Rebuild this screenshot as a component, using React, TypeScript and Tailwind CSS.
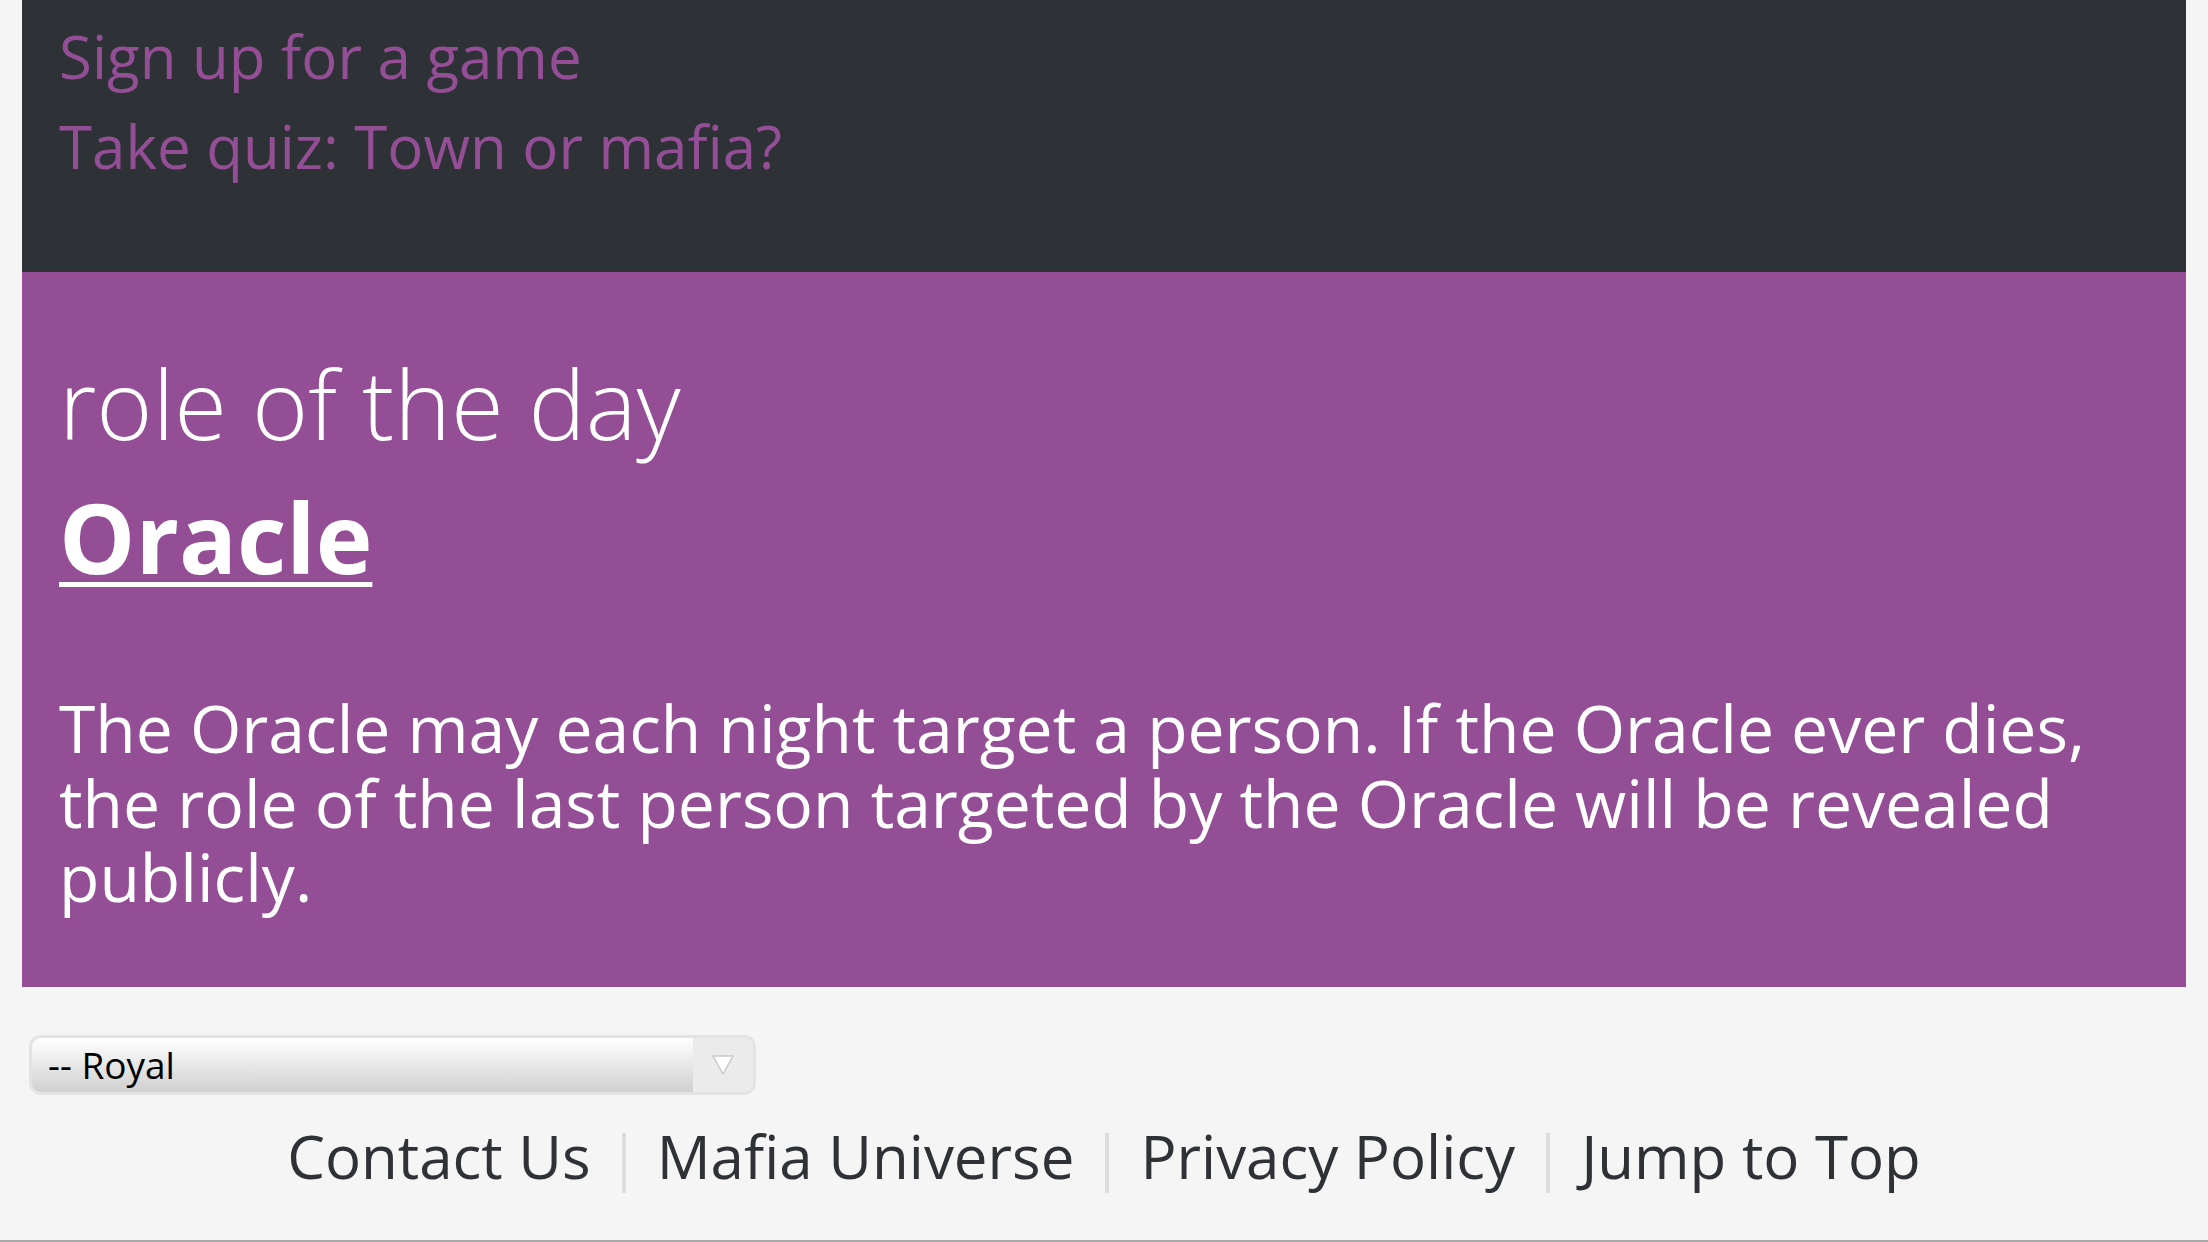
const links = ["Contact Us", "Mafia Universe", "Privacy Policy", "Jump to Top"];

const App = () => {
	return (
		<div className="min-h-screen bg-[#f5f5f5] font-['Open_Sans',sans-serif] flex flex-col">
			<section className="mx-[22px] bg-[#2e3236] pl-[37px] pt-[11px] pb-[81px]">
				<a href="#" className="block text-[60px] leading-[90px] text-[#934e96]">
					Sign up for a game
				</a>
				<a href="#" className="block text-[60px] leading-[90px] text-[#934e96]">
					Take quiz: Town or mafia?
				</a>
			</section>

			<section className="mx-[22px] bg-[#934e96] px-[37px] pt-[79px] pb-[73px] text-white">
				<h2 className="text-[96px] leading-[104px] font-light">role of the day</h2>
				<a href="#" className="mt-[30px] inline-block text-[96px] leading-[104px] font-bold underline decoration-[5px] underline-offset-[8px]">
					Oracle
				</a>
				<p className="mt-[101px] text-[66px] leading-[74.5px]">
					The Oracle may each night target a person. If the Oracle ever dies, the role of the last person targeted by the Oracle will be revealed
					publicly.
				</p>
			</section>

			<div className="ml-[29px] mt-[48px] flex h-[60px] w-[727px] overflow-hidden rounded-[12px] border-[3px] border-[#e3e3e3]">
				<div className="flex flex-1 items-center bg-gradient-to-b from-[#ffffff] to-[#d0d0d0] pl-[16px] text-[37px] text-black">-- Royal</div>
				<div className="flex w-[60px] items-center justify-center bg-[#ebebeb]">
					<svg width="24" height="22" viewBox="0 0 24 22">
						<path d="M2 2 L22 2 L12 20 Z" fill="#ffffff" stroke="#c9c9c9" strokeWidth="1.5" strokeLinejoin="round" />
					</svg>
				</div>
			</div>

			<nav className="mt-[31px] flex items-start justify-center text-[60px] leading-[60px] text-[#2e3236]">
				{links.map((l, i) => (
					<div key={l} className="flex items-start">
						{i > 0 && <span className="mx-[31px] mt-[7px] h-[60px] w-[4px] bg-[#dddddd]" />}
						<a href="#">{l}</a>
					</div>
				))}
			</nav>

			<div className="mt-auto h-[2px] bg-[#a9a9a9]" />
		</div>
	);
};

export default App;
